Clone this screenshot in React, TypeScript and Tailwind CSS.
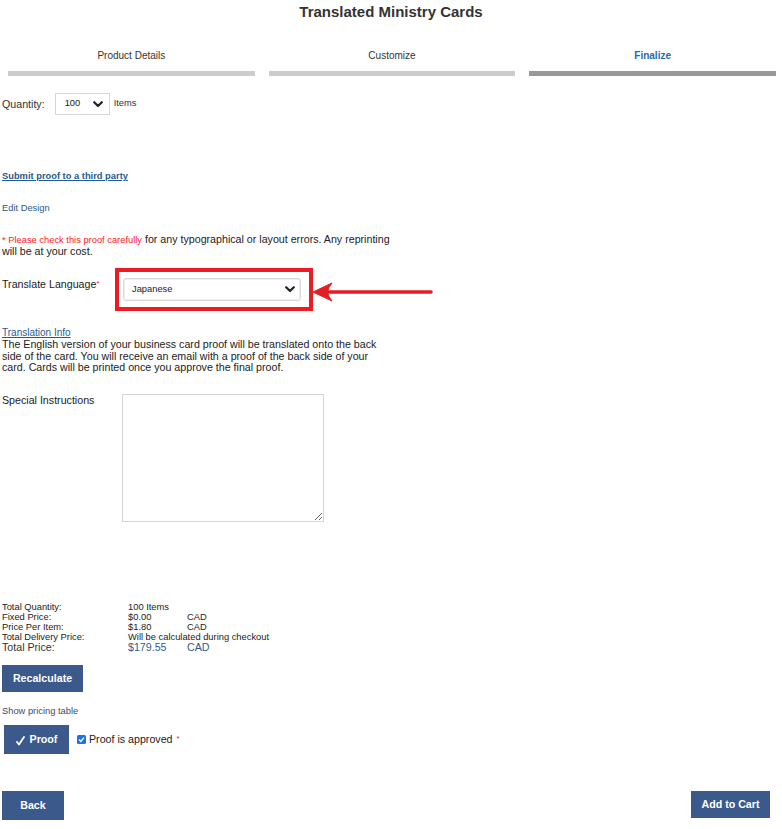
import React from "react";

function Chevron({ className }: { className?: string }) {
  return (
    <svg className={className} width="10" height="7" viewBox="0 0 10 7" fill="none">
      <path d="M1.2 1.2 L5 5 L8.8 1.2" stroke="#222" strokeWidth="2.2" strokeLinecap="round" strokeLinejoin="round" />
    </svg>
  );
}

function Btn({ children, className }: { children: React.ReactNode; className: string }) {
  return (
    <div className={`flex items-center justify-center bg-[#3b5a8b] text-white font-bold text-[10.67px] ${className}`}>
      {children}
    </div>
  );
}

export default function App() {
  return (
    <div className="w-[782px] min-h-[829px] bg-white text-[#333] font-['Liberation_Sans',Arial,sans-serif]">
      {/* Title */}
      <div className="text-center font-bold text-[15px] leading-[18px] pt-[3px] text-[#333]">
        Translated Ministry Cards
      </div>

      {/* Steps */}
      <div className="grid grid-cols-3 mt-[29px]">
        {[
          { t: "Product Details", active: false },
          { t: "Customize", active: false },
          { t: "Finalize", active: true },
        ].map((s) => (
          <div key={s.t} className="pl-[8px] pr-[6px]">
            <div
              className={`text-center text-[10px] leading-[12px] ${
                s.active ? "text-[#1f6aad] font-semibold" : "text-[#333]"
              }`}
            >
              {s.t}
            </div>
            <div className={`mt-[9px] h-[5px] ${s.active ? "bg-[#999999]" : "bg-[#cccccc]"}`} />
          </div>
        ))}
      </div>

      {/* Quantity */}
      <div className="flex items-center mt-[17px] pl-[2px]">
        <span className="text-[10.67px] leading-[12px]">Quantity:</span>
        <div className="ml-[10px] w-[55px] h-[22px] border border-[#d6d6d6] flex items-center justify-between pl-[9px] pr-[6px]">
          <span className="text-[9.33px] text-[#222]">100</span>
          <Chevron />
        </div>
        <span className="ml-[4px] text-[9.33px]">Items</span>
      </div>

      {/* Submit proof */}
      <div className="mt-[56px] pl-[2px] text-[9.33px] leading-[11px] font-bold text-[#1f5b8f] underline">
        Submit proof to a third party
      </div>

      <div className="mt-[21px] pl-[2px] text-[9.33px] leading-[11px] text-[#2a5a88]">Edit Design</div>

      {/* Warning */}
      <div className="mt-[20px] pl-[2px] w-[400px] leading-[11px] text-[10.67px] text-[#222]">
        <span className="text-[9.33px] text-[#ff1a1a]">* Please check this proof carefully</span> for any
        typographical or layout errors. Any reprinting will be at your cost.
      </div>

      {/* Translate Language */}
      <div className="flex items-start mt-[11px] pl-[2px]">
        <div className="w-[113px] mt-[10px] text-[10.67px] leading-[12px] text-[#222]">
          Translate Language<span className="text-[#ff1a1a] text-[8px] align-top">*</span>
        </div>
        <div className="border-[4px] border-[#ec1c24] pl-[4px] pr-[8px] py-[6px]">
          <div className="w-[178px] h-[23px] border border-[#d9d9d9] rounded-[3px] flex items-center justify-between pl-[8px] pr-[5px] shadow-[inset_0_0_0_1px_#eeeeee]">
            <span className="text-[9.33px] text-[#222]">Japanese</span>
            <Chevron />
          </div>
        </div>
        <svg className="mt-[12px] -ml-[1px]" width="122" height="24" viewBox="0 0 122 24">
          <line x1="14" y1="12" x2="119" y2="12" stroke="#e31e24" strokeWidth="3.5" strokeLinecap="round" />
          <path d="M1 12 L20 3 Q16 8 15.5 12 Q16 16 20 21 Z" fill="#e31e24" stroke="#e31e24" strokeWidth="1" strokeLinejoin="round" />
        </svg>
      </div>

      {/* Translation info */}
      <div className="mt-[16px] pl-[2px] text-[10px] leading-[12px] text-[#1f5b8f] underline">Translation Info</div>
      <div className="pl-[2px] w-[386px] text-[10.67px] leading-[11.5px] text-[#222]">
        The English version of your business card proof will be translated onto the back side of the card. You will
        receive an email with a proof of the back side of your card. Cards will be printed once you approve the final
        proof.
      </div>

      {/* Special instructions */}
      <div className="flex items-start mt-[20px] pl-[2px]">
        <div className="w-[120px] text-[10.67px] leading-[12px] text-[#222]">Special Instructions</div>
        <textarea
          className="w-[202px] h-[128px] border border-[#d4d4d4] resize-y outline-none bg-white"
          readOnly
        />
      </div>

      {/* Pricing */}
      <div className="mt-[80px] pl-[2px] text-[9.33px] leading-[10px] text-[#222]">
        <div className="flex">
          <div className="w-[126px]">Total Quantity:</div>
          <div>100 Items</div>
        </div>
        <div className="flex">
          <div className="w-[126px]">Fixed Price:</div>
          <div className="w-[59px]">$0.00</div>
          <div>CAD</div>
        </div>
        <div className="flex">
          <div className="w-[126px]">Price Per Item:</div>
          <div className="w-[59px]">$1.80</div>
          <div>CAD</div>
        </div>
        <div className="flex">
          <div className="w-[126px]">Total Delivery Price:</div>
          <div>Will be calculated during checkout</div>
        </div>
        <div className="flex text-[10.67px] leading-[11px]">
          <div className="w-[126px] text-[#333]">Total Price:</div>
          <div className="w-[59px] text-[#2f5b8e]">$179.55</div>
          <div className="text-[#2f5b8e]">CAD</div>
        </div>
      </div>

      <div className="mt-[12px] pl-[2px]">
        <Btn className="w-[81px] h-[27px]">Recalculate</Btn>
      </div>

      <div className="mt-[14px] pl-[2px] text-[9.33px] leading-[11px] text-[#3b4d6e]">Show pricing table</div>

      {/* Proof */}
      <div className="flex items-center mt-[8px] pl-[4px]">
        <Btn className="w-[65px] h-[29px]">
          <svg width="9" height="10" viewBox="0 0 9 10" className="mr-[5px] mt-[4px]">
            <path d="M1 6 L3 8.5 L8 1" stroke="#fff" strokeWidth="1.8" fill="none" strokeLinecap="round" strokeLinejoin="round" />
          </svg>
          Proof
        </Btn>
        <div className="ml-[8px] w-[9px] h-[9px] rounded-[1.5px] bg-[#1a73e8] flex items-center justify-center">
          <svg width="7" height="7" viewBox="0 0 7 7">
            <path d="M1 3.6 L2.8 5.4 L6 1.6" stroke="#fff" strokeWidth="1.4" fill="none" />
          </svg>
        </div>
        <span className="ml-[3px] text-[10.67px] text-[#222]">Proof is approved</span>
        <span className="ml-[4px] text-[8px] text-[#ff1a1a]">*</span>
      </div>

      {/* Bottom buttons */}
      <div className="flex justify-between items-start mt-[37px] pl-[2px] pr-[12px] pb-[9px]">
        <Btn className="w-[62px] h-[29px]">Back</Btn>
        <Btn className="w-[79px] h-[27px]">Add to Cart</Btn>
      </div>
    </div>
  );
}
